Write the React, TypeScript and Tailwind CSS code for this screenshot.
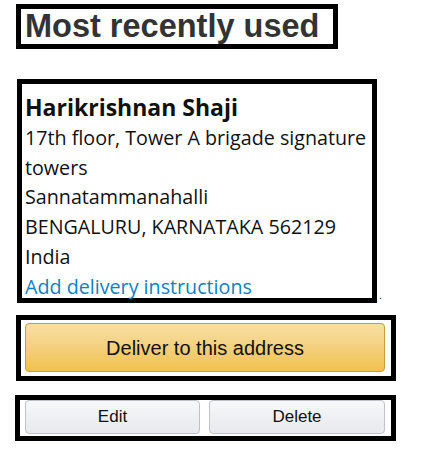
import React from 'react';

const addressLines = [
	'17th floor, Tower A brigade signature',
	'towers',
	'Sannatammanahalli',
	'BENGALURU, KARNATAKA 562129',
	'India',
];

export default function App() {
	return (
		<div className="w-[446px] h-[460px] bg-white pt-[4px] font-['Liberation_Sans',Arial,sans-serif]">
			{/* title */}
			<div className="ml-[16px] w-[322px] h-[45px] border-[5px] border-black pl-[4px]">
				<h1 className="text-[32.5px] leading-[35px] font-bold text-[#333333]">Most recently used</h1>
			</div>

			{/* address card */}
			<div className="mt-[30px] ml-[17px] flex items-end">
				<div className="w-[360px] h-[224px] border-[5px] border-black pl-[3px] pt-[8px] font-['Open_Sans',sans-serif] text-[#0f1111]">
					<div className="text-[23px] leading-[31px] font-bold">Harikrishnan Shaji</div>
					{addressLines.map((line) => (
						<div key={line} className="text-[19.7px] leading-[29.7px]">
							{line}
						</div>
					))}
					<a href="#" className="block text-[19.7px] leading-[29.7px] text-[#0f7fc0]">
						Add delivery instructions
					</a>
				</div>
				<span className="ml-[2px] text-[10px] leading-[14px] text-black">.</span>
			</div>

			{/* deliver */}
			<div className="mt-[12px] ml-[16px] w-[380px] h-[66px] border-[5px] border-black pl-[4px] pt-[3px] pr-[6px]">
				<button className="w-full h-[49px] rounded-[4px] border border-[#c89f3b] bg-gradient-to-b from-[#f7dfa5] to-[#f0c14b] text-[20px] text-[#111111]">
					Deliver to this address
				</button>
			</div>

			{/* edit / delete */}
			<div className="mt-[14px] ml-[15px] w-[381px] h-[46px] border-[5px] border-black pl-[5px] pr-[6px] pt-[0px] flex gap-[9px]">
				<button className="w-[175px] h-[34px] rounded-[4px] border border-[#bfc2c7] bg-gradient-to-b from-[#f7f8fa] to-[#e7e9ec] text-[17px] text-[#111111]">
					Edit
				</button>
				<button className="w-[176px] h-[34px] rounded-[4px] border border-[#bfc2c7] bg-gradient-to-b from-[#f7f8fa] to-[#e7e9ec] text-[17px] text-[#111111]">
					Delete
				</button>
			</div>
		</div>
	);
}
